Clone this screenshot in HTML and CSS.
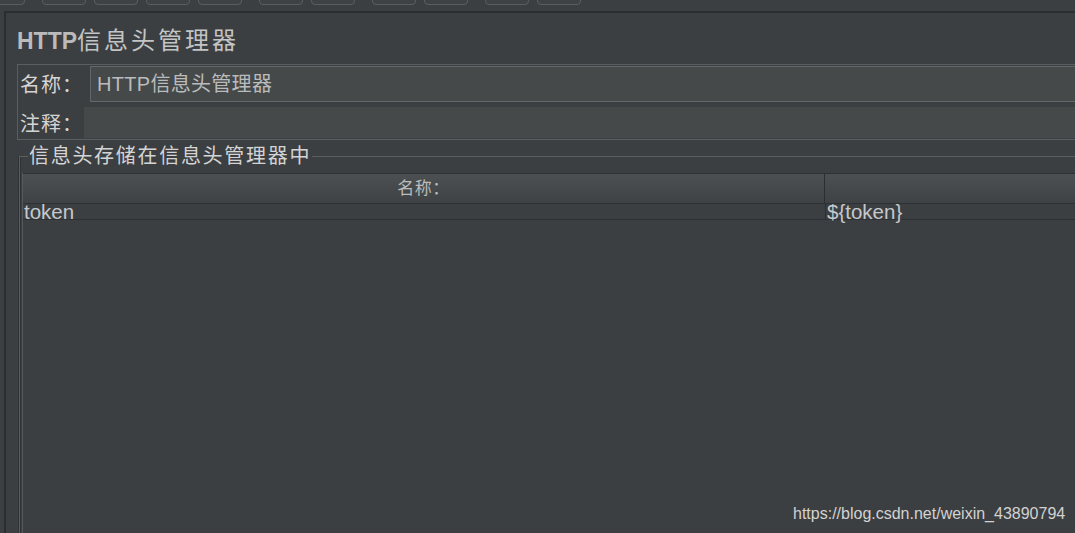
FILE: index.html
```html
<!DOCTYPE html>
<html lang="zh">
<head>
    <meta charset="UTF-8">
    <title>HTTP信息头管理器</title>
    <link rel="stylesheet" href="styles.css">
</head>
<body>
    <div class="toolbar">
        <span class="tb-btn first"></span>
        <span class="tb-btn group"></span><span class="tb-btn"></span><span class="tb-btn"></span><span class="tb-btn"></span>
        <span class="tb-btn group"></span><span class="tb-btn"></span>
        <span class="tb-btn group"></span><span class="tb-btn"></span>
        <span class="tb-btn group"></span><span class="tb-btn"></span>
    </div>

    <div class="panel">
        <h1 class="title">HTTP<span class="title-cjk">信息头管理器</span></h1>

        <div class="fields">
            <div class="row">
                <label class="label name-label">名称：</label>
                <div class="field name-field">HTTP信息头管理器</div>
            </div>
            <div class="row comment-row">
                <label class="label comment-label">注释：</label>
                <div class="field comment-field"></div>
            </div>
        </div>

        <fieldset class="headers">
            <legend>信息头存储在信息头管理器中</legend>
            <div class="table">
                <div class="thead">
                    <div class="th col-name">名称：</div>
                    <div class="th col-value"></div>
                </div>
                <div class="tr">
                    <div class="td col-name">token</div>
                    <div class="td col-value">${token}</div>
                </div>
            </div>
        </fieldset>
    </div>

    <div class="watermark">https://blog.csdn.net/weixin_43890794</div>
</body>
</html>
```

FILE: styles.css
```css
body {
    margin: 0;
    height: 533px;
    overflow: hidden;
    background-color: #3c3f41;
    color: #bbbbbb;
    font-family: "Liberation Sans", "Noto Sans CJK SC", sans-serif;
    position: relative;
}

/* top toolbar, only the button bottoms are visible */
.toolbar {
    height: 11px;
    display: flex;
    overflow: hidden;
}
.tb-btn {
    flex: none;
    width: 42px;
    height: 14px;
    margin-top: -11px;
    margin-left: 8px;
    border: 1px solid #5a5d5f;
    border-radius: 4px;
    background-color: #3e4244;
}
.tb-btn.first {
    margin-left: -19px;
}
.tb-btn.group {
    margin-left: 17px;
}

.panel {
    margin-left: 4px;
    height: 520px;
    border-left: 2px solid #2b2e30;
    border-top: 2px solid #2b2e30;
    overflow: hidden;
}

.title {
    margin: 0;
    padding: 14px 0 0 11px;
    height: 37px;
    font-size: 23px;
    line-height: 28px;
    font-weight: bold;
    white-space: nowrap;
}
.title-cjk {
    font-weight: normal;
    font-size: 24px;
    letter-spacing: 3px;
    color: #c4c4c4;
}

.fields {
    margin-left: 11px;
    border: 1px solid #5b5e60;
    border-right: none;
    height: 74px;
}
.row {
    display: flex;
    align-items: center;
}
.label {
    flex: none;
    padding-left: 2px;
    font-size: 20px;
    letter-spacing: 1px;
    color: #d4d4d4;
}
.name-label {
    width: 70px;
}
.comment-label {
    width: 64px;
}
.field {
    flex: 1;
    background-color: #45494a;
    font-size: 20px;
    color: #bbbbbb;
    white-space: nowrap;
}
.name-field {
    margin-top: 1px;
    height: 34px;
    line-height: 34px;
    padding-left: 6px;
    letter-spacing: 0.3px;
    border: 1px solid #646769;
    border-right: none;
}
.comment-row {
    margin-top: 5px;
}
.comment-field {
    height: 31px;
}

.headers {
    margin: 4px 0 0 13px;
    padding: 5px 0 0 2px;
    border: 1px solid #5b5e60;
    border-right: none;
    border-bottom: none;
    box-shadow: inset 1px 0 0 #303335, -1px 0 0 #303335;
    height: 400px;
}
.headers legend {
    margin-left: 6px;
    padding: 0 1px;
    font-size: 20px;
    line-height: 24px;
    letter-spacing: 1.7px;
    color: #d4d4d4;
    white-space: nowrap;
}

.table {
    border-left: 1px solid #56595b;
    height: 380px;
}
.thead, .tr {
    display: flex;
}
.thead {
    height: 29px;
    border-top: 1px solid #2e3133;
    border-bottom: 1px solid #2e3133;
    background: linear-gradient(#4c5052, #3f4244);
}
.tr {
    height: 15px;
    border-bottom: 1px solid #2e3133;
}
.col-name {
    flex: none;
    width: 801px;
    border-right: 1px solid #2b2e30;
}
.col-value {
    flex: 1;
}
.th {
    font-size: 17px;
    line-height: 29px;
    letter-spacing: 0.5px;
    text-align: center;
    color: #bbbbbb;
}
.td {
    font-size: 20.5px;
    line-height: 15px;
    padding-left: 1px;
    color: #c5c8cc;
    white-space: nowrap;
}

.watermark {
    position: absolute;
    left: 793px;
    top: 504px;
    font-size: 16px;
    line-height: 20px;
    color: #d2d2d2;
    white-space: nowrap;
}
```
